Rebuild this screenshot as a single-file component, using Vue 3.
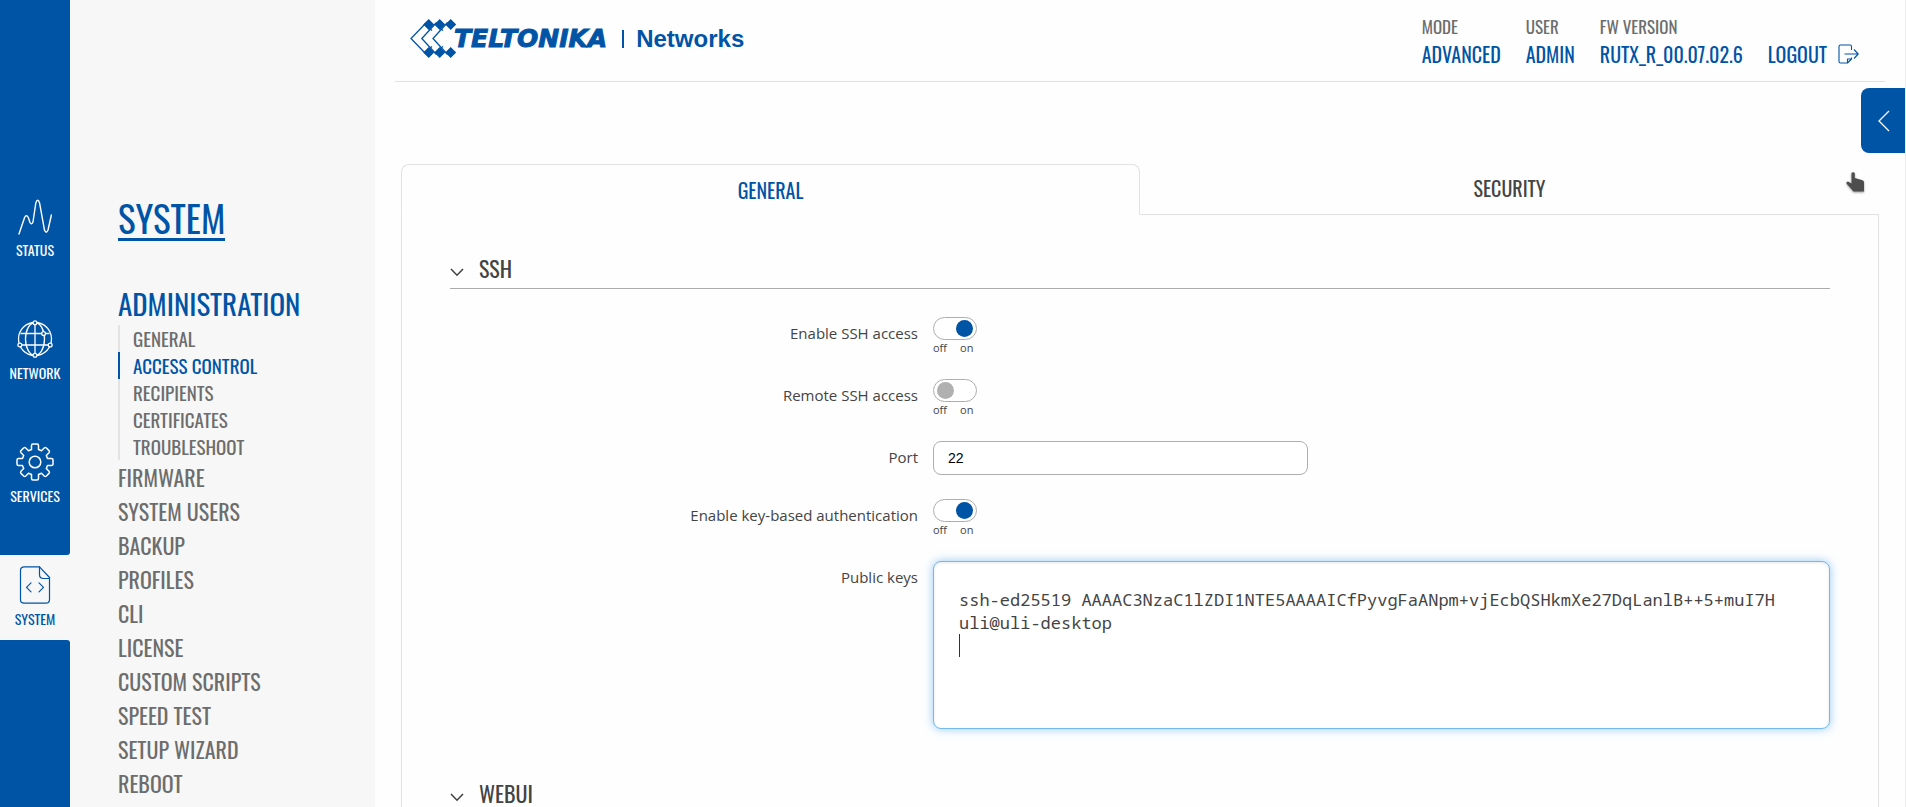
<script setup>
import { ref } from 'vue'

const subItems = ['General', 'Access Control', 'Recipients', 'Certificates', 'Troubleshoot']
const menuItems = ['Firmware', 'System Users', 'Backup', 'Profiles', 'CLI', 'License', 'Custom Scripts', 'Speed Test', 'Setup Wizard', 'Reboot']
const info = [
  { label: 'Mode', value: 'Advanced' },
  { label: 'User', value: 'Admin' },
  { label: 'FW Version', value: 'RUTX_R_00.07.02.6' },
]
const sshEnabled = ref(true)
const sshRemote = ref(false)
const keyAuth = ref(true)
const port = ref('22')
const keys = ref('ssh-ed25519 AAAAC3NzaC1lZDI1NTE5AAAAICfPyvgFaANpm+vjEcbQSHkmXe27DqLanlB++5+muI7H\nuli@uli-desktop\n')
</script>

<template>
  <div class="app">
    <nav class="rail" aria-label="Main">
      <div class="rail-block rail-top">
        <a href="#status" class="rail-item">
          <svg viewBox="0 0 38 38" width="38" height="38" fill="none" stroke="currentColor" stroke-width="1.4" stroke-linecap="round" stroke-linejoin="round">
            <path d="M3 37 L8.600 20.500 Q10.300 17 12.300 20.500 L14 25.500 Q15.500 28.500 17 25 L19.800 6 Q21.700 0.500 23.600 6 L28.500 33 Q30.200 37.500 32 33 L35.400 18" />
          </svg>
          <span>Status</span>
        </a>
        <a href="#network" class="rail-item">
          <svg viewBox="0 0 38 38" width="38" height="38" fill="none" stroke="currentColor" stroke-width="1.3">
            <circle cx="19" cy="19" r="16.500" />
            <ellipse cx="19" cy="19" rx="9.500" ry="16.500" />
            <path d="M19 3.500v31M4.500 13.500H26M29.500 13.500h4M5 25h28" />
            <g class="node">
              <circle cx="19" cy="2.800" r="1.900" /><circle cx="19" cy="35.200" r="1.900" />
              <circle cx="3.800" cy="25" r="1.900" /><circle cx="34.200" cy="25" r="1.900" />
              <circle cx="27.600" cy="13.500" r="1.900" />
            </g>
          </svg>
          <span>Network</span>
        </a>
        <a href="#services" class="rail-item">
          <svg viewBox="0 0 38 38" width="38" height="38" fill="none" stroke="currentColor" stroke-width="1.5" stroke-linejoin="round">
            <circle cx="19" cy="19" r="5.800" />
            <path d="M15.500 2.500Q15.500 1 17 1H21Q22.500 1 22.500 2.500V6.500L25.500 7.700L28.200 5Q29.300 4 30.400 5L33 7.600Q34 8.700 33 9.800L30.300 12.500L31.500 15.500H35.500Q37 15.500 37 17V21Q37 22.500 35.500 22.500H31.500L30.300 25.500L33 28.200Q34 29.300 33 30.400L30.400 33Q29.300 34 28.200 33L25.500 30.300L22.500 31.500V35.500Q22.500 37 21 37H17Q15.500 37 15.500 35.500V31.500L12.500 30.300L9.800 33Q8.700 34 7.600 33L5 30.400Q4 29.300 5 28.200L7.700 25.500L6.500 22.500H2.500Q1 22.500 1 21V17Q1 15.500 2.500 15.500H6.500L7.700 12.500L5 9.800Q4 8.700 5 7.600L7.600 5Q8.700 4 9.800 5L12.500 7.700L15.500 6.500Z" />
          </svg>
          <span>Services</span>
        </a>
      </div>
      <a href="#system" class="rail-item active" aria-current="page">
        <svg viewBox="0 0 38 38" width="38" height="38" fill="none" stroke="currentColor" stroke-width="1.2" stroke-linecap="round" stroke-linejoin="round">
          <path d="M8.500 0.800H23.500L33.500 11.500V33.500Q33.500 37.200 29.800 37.200H8.200Q4.500 37.200 4.500 33.500V4.500Q4.500 0.800 8.500 0.800Z" />
          <path d="M23.500 0.800V8.500Q23.500 12.500 27.500 12.500H33.300" />
          <path d="M15 16.800L10.500 21.300L15 25.800M23 16.800L27.500 21.300L23 25.800" />
        </svg>
        <span>System</span>
      </a>
      <div class="rail-block rail-bottom"></div>
    </nav>

    <aside class="menu">
      <h1><a href="#system">System</a></h1>
      <a href="#administration" class="menu-head">Administration</a>
      <ul class="sub">
        <li v-for="s in subItems" :key="s" :class="{ current: s === 'Access Control' }"><a href="#sub">{{ s }}</a></li>
      </ul>
      <ul class="items">
        <li v-for="m in menuItems" :key="m"><a href="#item">{{ m }}</a></li>
      </ul>
    </aside>

    <main class="main">
      <header class="header">
        <div class="logo">
          <svg class="mark" viewBox="0 0 48 40" width="48" height="40" fill="none" stroke="currentColor" stroke-width="1.3">
            <g fill="currentColor" stroke="none">
              <path d="M18.700 0L24.200 5.500L29.700 0L35.200 5.500L40.700 0L46.200 5.500L40.700 11L35.200 5.500L29.700 11L24.200 5.500L18.700 11L13.200 5.500Z" />
              <path d="M18.700 28L24.200 33.500L29.700 28L35.200 33.500L40.700 28L46.200 33.500L40.700 39L35.200 33.500L29.700 39L24.200 33.500L18.700 39L13.200 33.500Z" />
            </g>
            <path d="M15.500 4.500L1 19.500L15.500 34.500M26.500 3.500L11.800 19.500L26.500 35.500M37.500 3.500L23 19.500L37.500 35.500" />
            <path d="M18.700 9L22 11.500M29.700 9L33 11.500M18.700 30L22 27.500M29.700 30L33 27.500" />
          </svg>
          <span class="brand">TELTONIKA</span>
          <span class="bar"></span>
          <span class="division">Networks</span>
        </div>
        <dl class="info">
          <div v-for="i in info" :key="i.label"><dt>{{ i.label }}</dt><dd>{{ i.value }}</dd></div>
        </dl>
        <button type="button" class="logout">
          <span>Logout</span>
          <svg viewBox="0 0 22 20" width="22" height="20" fill="none" stroke="currentColor" stroke-width="1.1" stroke-linejoin="round">
            <path d="M13.500 6V2.500Q13.500 1 12 1H2.500Q1 1 1 2.500V17.500Q1 19 2.500 19H9.500L13.500 15V13.500M9.500 19V15H13.500" />
            <path d="M6.500 10H20M16 5.500L20.200 10L16 14.500" />
          </svg>
        </button>
      </header>

      <section class="panel">
        <div class="tabs" role="tablist">
          <button type="button" role="tab" class="tab selected" aria-selected="true">General</button>
          <button type="button" role="tab" class="tab" aria-selected="false">Security</button>
        </div>

        <div class="body">
          <h2 class="section">
            <svg viewBox="0 0 14 9" width="14" height="9" fill="none" stroke="currentColor" stroke-width="1.600"><path d="M1 1L7 7.200L13 1" /></svg>
            SSH
          </h2>
          <form class="form" @submit.prevent>
            <label for="ssh">Enable SSH access</label>
            <div class="switch"><input id="ssh" v-model="sshEnabled" type="checkbox"><span><i>off</i><i>on</i></span></div>
            <label for="remote">Remote SSH access</label>
            <div class="switch"><input id="remote" v-model="sshRemote" type="checkbox"><span><i>off</i><i>on</i></span></div>
            <label for="port">Port</label>
            <input id="port" v-model="port" class="text" type="text">
            <label for="auth">Enable key-based authentication</label>
            <div class="switch"><input id="auth" v-model="keyAuth" type="checkbox"><span><i>off</i><i>on</i></span></div>
            <label for="keys">Public keys</label>
            <div class="keys">
              <textarea id="keys" v-model="keys" spellcheck="false"></textarea>
              <span class="caret"></span>
            </div>
          </form>
          <h2 class="section">
            <svg viewBox="0 0 14 9" width="14" height="9" fill="none" stroke="currentColor" stroke-width="1.600"><path d="M1 1L7 7.200L13 1" /></svg>
            WebUI
          </h2>
        </div>
      </section>
    </main>

    <button type="button" class="drawer" aria-label="Open side panel">
      <svg viewBox="0 0 12 22" width="12" height="22" fill="none" stroke="currentColor" stroke-width="1.300"><path d="M11 1L1 11L11 21" /></svg>
    </button>
    <svg class="pointer" viewBox="0 0 20 22" width="20" height="22">
      <path d="M6.500 2Q8.200 0.400 9.800 2V7L17.500 9.200Q19 9.800 19 11.500V20.500H8.500L1.500 12.500Q1 10.800 3 10.500L6.500 12.500Z" />
    </svg>
  </div>
</template>

<style>
body { margin: 0; }
</style>

<style scoped>
.app {
  --blue: #0054a6;
  position: relative;
  display: flex;
  height: 100vh;
  overflow: hidden;
  box-sizing: border-box;
  border-right: 1px solid #ececec;
  background: #fefefe;
  color: #444;
  font-family: Oswald, "Roboto Condensed", sans-serif;
  font-weight: 400;
}
a { color: inherit; text-decoration: none; }
ul, h1, h2, dl, dd { margin: 0; padding: 0; list-style: none; font-weight: inherit; }
button { font: inherit; color: inherit; background: none; border: 0; padding: 0; cursor: pointer; text-transform: uppercase; }

.rail { display: flex; flex-direction: column; flex: 0 0 70px; background: #f7f7f7; color: #fff; font-size: 14px; }
.rail-block { background: var(--blue); }
.rail-top { display: flex; flex-direction: column; gap: 38px; padding: 186px 0 38px; border-bottom-right-radius: 3px; }
.rail-bottom { flex: 1; border-top-right-radius: 3px; }
.rail-item { display: flex; flex-direction: column; align-items: center; height: 85px; box-sizing: border-box; padding-top: 11px; line-height: 20px; text-transform: uppercase; }
.rail-item svg { margin-bottom: 5px; }
.rail-item.active { color: var(--blue); }
.node { fill: var(--blue); }

.menu { flex: 0 0 257px; padding: 196px 0 0 48px; background: #f7f7f7; text-transform: uppercase; color: #6d6d6d; }
.menu h1 { color: var(--blue); font-size: 37px; line-height: 44px; }
.menu h1 a { display: inline-block; border-bottom: 3px solid; line-height: 40px; }
.menu-head { display: block; margin-top: 41px; margin-bottom: 1px; color: var(--blue); font-size: 29px; line-height: 42px; }
.sub li { border-left: 2px solid #e3e3e3; padding-left: 13px; font-size: 19px; line-height: 27px; }
.sub .current { border-color: var(--blue); color: var(--blue); }
.items li { font-size: 22px; line-height: 34px; }

.main { flex: 1; min-width: 0; padding: 0 20px; }
.header { display: flex; align-items: flex-start; padding: 0 25px 0 15px; border-bottom: 1px solid #e2e2e2; height: 81px; color: var(--blue); font-size: 20px; line-height: 28px; text-transform: uppercase; }
.logo { display: flex; align-items: center; margin: 19px auto 0 0; height: 40px; text-transform: none; white-space: nowrap; }
.brand { margin-left: -4px; font: italic bold 25px/40px "DejaVu Sans", sans-serif; -webkit-text-stroke: 1px; }
.bar { width: 2px; height: 18px; margin: 0 12px 0 15px; background: var(--blue); }
.division { font: bold 24px/40px "Liberation Sans", Arial, sans-serif; }
.info { display: flex; gap: 25px; margin-right: 25px; padding-top: 14px; }
.info dt { font-size: 17px; line-height: 26px; color: #6d6d6d; }
.logout { display: flex; align-items: center; gap: 11px; padding-top: 40px; line-height: 28px; }

.panel { margin: 82px 6px 0; }
.tabs { display: grid; grid-template-columns: 1fr 1fr; }
.tab { height: 51px; border-bottom: 1px solid #e2e2e2; font-size: 20px; line-height: 46px; padding-bottom: 2px; }
.tab.selected { border: 1px solid #e2e2e2; border-bottom-color: transparent; border-radius: 8px 8px 0 0; padding-bottom: 0; color: var(--blue); }

.body { min-height: 100vh; padding: 35px 48px 0; border: solid #e2e2e2; border-width: 0 1px; }
.section { display: flex; align-items: center; gap: 15px; border-bottom: 1px solid #aaa; padding-bottom: 1px; font-size: 22px; line-height: 37px; text-transform: uppercase; }
.section svg { margin-top: 7px; }
.form { display: grid; grid-template-columns: 468px minmax(0, 1fr); gap: 24px 15px; padding: 28px 0 46px; font-family: "Open Sans", "Noto Sans", sans-serif; font-size: 15px; }
.form label { text-align: right; line-height: 32px; }
.switch { height: 38px; }
.switch input { display: block; appearance: none; box-sizing: border-box; width: 44px; height: 23px; margin: 0; padding: 2px; border: 1px solid #aeaeae; border-radius: 12px; background: #fff; }
.switch input::before { content: ""; display: block; width: 17px; height: 17px; margin-left: 1px; border-radius: 50%; background: #b0b0b0; }
.switch input:checked::before { margin-left: 20px; background: var(--blue); }
.switch span { display: flex; gap: 13px; font-size: 11px; line-height: 15px; }
.switch i { font-style: normal; }
.text { box-sizing: border-box; width: 375px; height: 34px; border: 1px solid #aeaeae; border-radius: 8px; padding: 0 14px; font: 14px "Liberation Sans", Arial, sans-serif; color: #000; background: #fff; }
.keys { position: relative; height: 168px; }
.keys textarea { display: block; box-sizing: border-box; width: 100%; height: 100%; margin: 0; padding: 26px 25px; border: 1px solid #74b9f0; border-radius: 8px; outline: 0; resize: none; box-shadow: 0 0 10px rgba(82, 168, 236, .6), inset 0 1px 3px rgba(0, 0, 0, .1); background: #fff; color: #444; font: 17px/23px "Noto Sans Mono", "DejaVu Sans Mono", monospace; }
.caret { position: absolute; left: 26px; top: 73px; width: 1px; height: 23px; background: #333; }

.drawer { position: absolute; right: 0; top: 88px; display: grid; place-items: center; width: 44px; height: 65px; padding-left: 1px; border-radius: 8px 0 0 8px; background: var(--blue); color: #fff; }
.pointer { position: absolute; right: 40px; top: 171px; fill: #4d4d4d; filter: drop-shadow(0 1px 1px rgba(0, 0, 0, .4)); }
</style>
